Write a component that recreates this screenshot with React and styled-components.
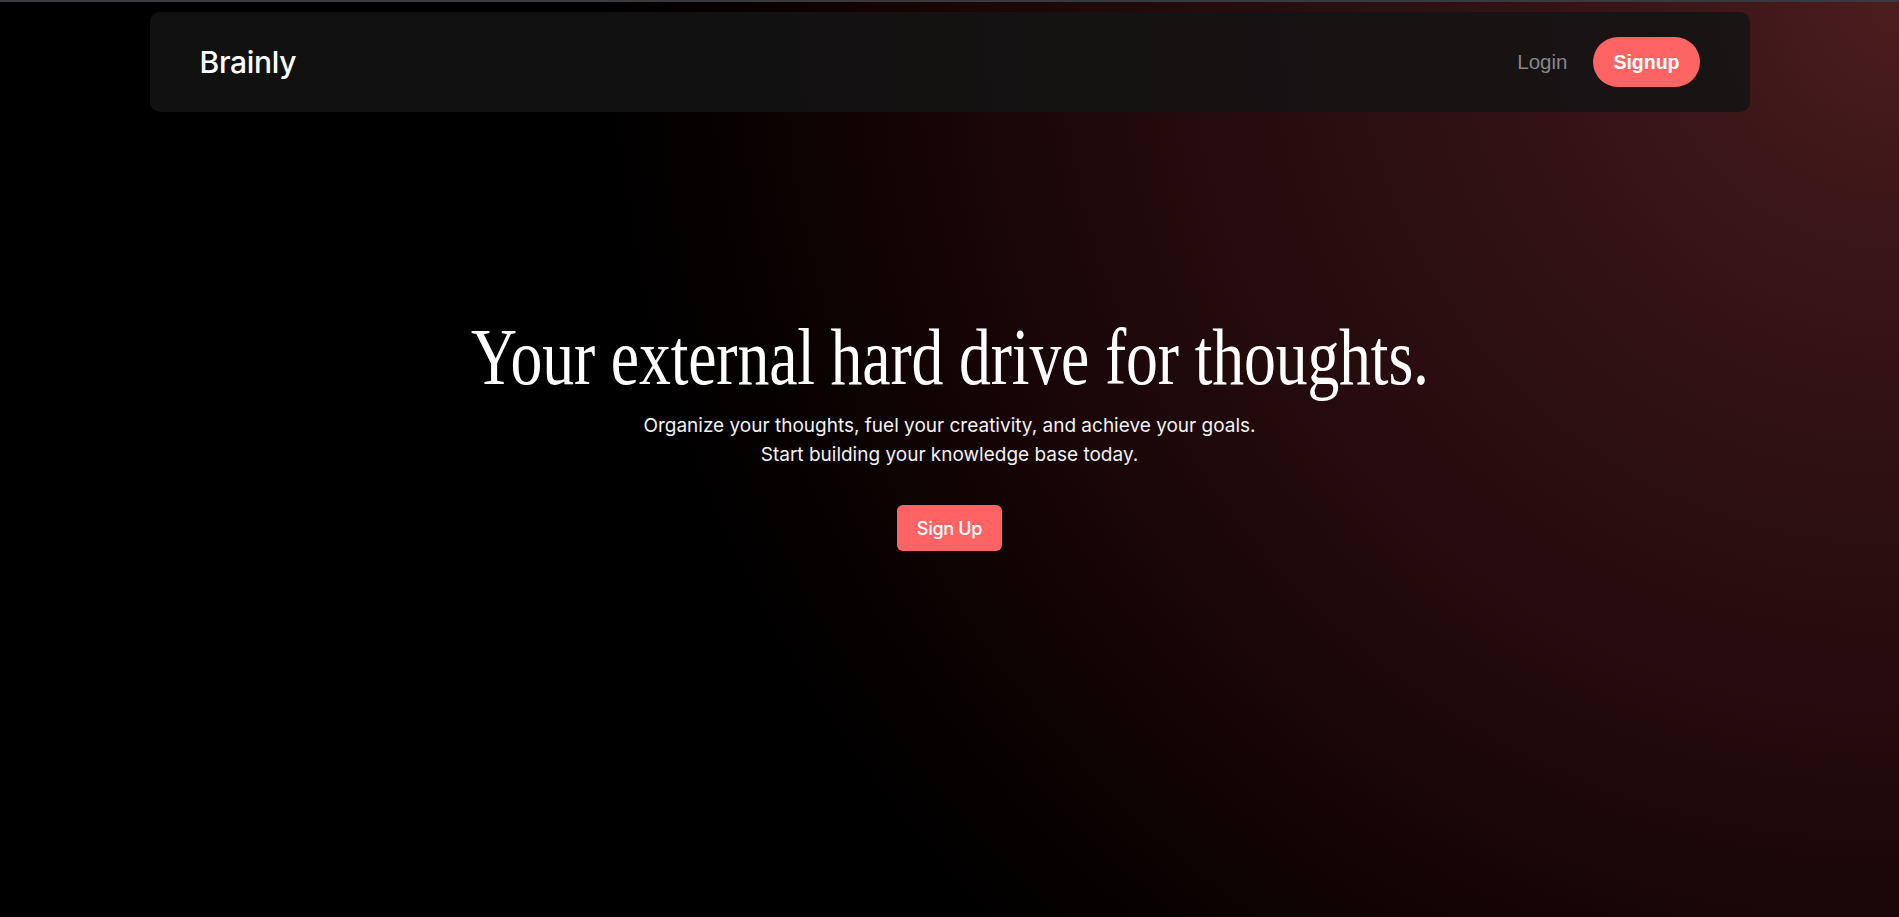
import React from "react";
import styled, { createGlobalStyle } from "styled-components";

const GlobalStyle = createGlobalStyle`
  * { box-sizing: border-box; }
  html, body { margin: 0; padding: 0; background: #000; }
  body { font-family: Inter, "Noto Sans", sans-serif; -webkit-font-smoothing: antialiased; }
`;

const Page = styled.div`
  min-height: 100vh;
  border-top: 2px solid #3a3a3e;
  background: radial-gradient(
    circle at 100% 0%,
    #4b1d1f 0px,
    #3a1517 250px,
    #2e1012 480px,
    #220a0b 760px,
    #150405 1000px,
    #070101 1180px,
    #000 1320px
  );
  display: flex;
  flex-direction: column;
  align-items: center;
`;

const Nav = styled.nav`
  width: 1600px;
  max-width: 100%;
  height: 100px;
  margin-top: 10px;
  padding: 0 50px;
  border-radius: 10px;
  background: rgba(20, 20, 20, 0.86);
  display: flex;
  align-items: center;
  justify-content: space-between;
`;

const Logo = styled.div`
  font-family: Inter, sans-serif;
  font-size: 30px;
  font-weight: 500;
  color: #fff;
  letter-spacing: -0.3px;
`;

const NavActions = styled.div`
  display: flex;
  align-items: center;
  gap: 26px;
`;

const NavLink = styled.a`
  font-family: "Liberation Sans", Arial, sans-serif;
  font-size: 20.5px;
  color: #878787;
  text-decoration: none;
  cursor: pointer;
`;

const PillButton = styled.button`
  height: 50px;
  padding: 0 20px;
  border: none;
  border-radius: 25px;
  background: #ff6464;
  color: #fff;
  font-family: "Liberation Sans", Arial, sans-serif;
  font-weight: 700;
  font-size: 19.5px;
  cursor: pointer;
`;

const Hero = styled.main`
  padding-top: 205px;
  display: flex;
  flex-direction: column;
  align-items: center;
  text-align: center;
`;

const Title = styled.h1`
  margin: 0;
  font-family: "Liberation Serif", "Times New Roman", serif;
  font-weight: 400;
  font-size: 80px;
  line-height: 80px;
  color: #fff;
  white-space: nowrap;
  display: inline-block;
  transform: scaleX(0.797);
  letter-spacing: -0.2px;
`;

const Subtitle = styled.p`
  margin: 14px 0 0;
  font-family: Inter, sans-serif;
  font-size: 19px;
  line-height: 29px;
  color: #f2f2f2;
`;

const CtaButton = styled.button`
  margin-top: 36px;
  height: 46px;
  padding: 0 20px;
  border: none;
  border-radius: 6px;
  background: #ff6464;
  color: #fff;
  font-family: Inter, sans-serif;
  font-size: 18px;
  font-weight: 500;
  letter-spacing: -0.3px;
  cursor: pointer;
`;

export default function App() {
  return (
    <>
      <GlobalStyle />
      <Page>
        <Nav>
          <Logo>Brainly</Logo>
          <NavActions>
            <NavLink>Login</NavLink>
            <PillButton>Signup</PillButton>
          </NavActions>
        </Nav>
        <Hero>
          <Title>Your external hard drive for thoughts.</Title>
          <Subtitle>
            Organize your thoughts, fuel your creativity, and achieve your goals.
            <br />
            Start building your knowledge base today.
          </Subtitle>
          <CtaButton>Sign Up</CtaButton>
        </Hero>
      </Page>
    </>
  );
}
